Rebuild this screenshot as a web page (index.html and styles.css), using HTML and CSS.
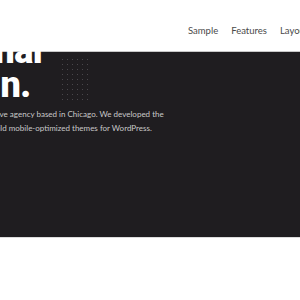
FILE: index.html
```html
<!DOCTYPE html>
<html lang="en">
<head>
<meta charset="UTF-8">
<meta name="viewport" content="width=device-width, initial-scale=1.0">
<title>Agency</title>
<link rel="stylesheet" href="styles.css">
</head>
<body>
<div class="page">
  <header class="site-header">
    <nav class="main-nav">
      <a href="#">Sample</a>
      <a href="#">Features</a>
      <a href="#">Layouts</a>
      <a href="#">Contact</a>
    </nav>
  </header>
  <section class="hero">
    <div class="hero-inner">
      <h1>Minimal<br>design.</h1>
      <p>We are a small and creative agency based in Chicago. We developed the<br>perfect tools to easily build mobile-optimized themes for WordPress.</p>
    </div>
    <div class="dots"></div>
  </section>
</div>
</body>
</html>
```
FILE: styles.css
```css
body {
  margin: 0;
  padding: 0;
  background-color: #fff;
  font-family: Lato, "Open Sans", sans-serif;
  overflow: hidden;
}
.page {
  width: 300px;
  overflow: hidden;
}
.site-header {
  height: 51px;
  display: flex;
  align-items: center;
  padding-left: 188px;
  white-space: nowrap;
}
.main-nav {
  display: flex;
  gap: 13px;
  padding-top: 9px;
}
.main-nav a {
  color: #4a4a4a;
  text-decoration: none;
  font-size: 9.5px;
}
.hero {
  position: relative;
  height: 185px;
  background-color: #1f1d20;
  border-top: 1px solid #c8c8c8;
  border-bottom: 1px solid #dcdcdc;
}
.hero-inner {
  margin-left: -88px;
  white-space: nowrap;
}
.hero h1 {
  margin: -18px 0 0 2px;
  color: #fff;
  font-family: Roboto, sans-serif;
  font-weight: 900;
  font-size: 36px;
  line-height: 34px;
  letter-spacing: -0.5px;
}
.hero p {
  margin: 5px 0 0;
  color: #c9c9c9;
  font-size: 8px;
  line-height: 14px;
}
.dots {
  position: absolute;
  left: 60px;
  top: 5px;
  width: 28px;
  height: 44px;
  background-image: radial-gradient(circle, #4a484c 0.7px, transparent 1px);
  background-size: 5px 5px;
}
```
